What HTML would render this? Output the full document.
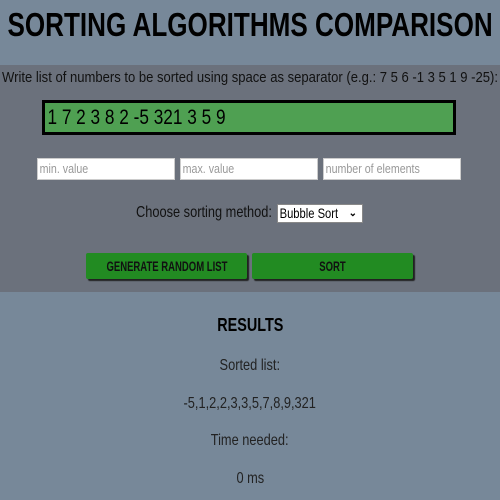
<!DOCTYPE html>
<html><head><style>
body{margin:0;width:500px;height:500px;background:#778899;font-family:"Liberation Sans",Arial,sans-serif;color:#111;position:relative;overflow:hidden}
.t{position:absolute;left:0;width:500px;display:flex;justify-content:center;white-space:nowrap}
.t span{display:inline-block;flex:none;transform:scaleX(.8);transform-origin:center}
#mid{position:absolute;left:0;top:65px;width:500px;height:227px;background:#6b717c}
.inp{position:absolute;top:158px;width:136px;height:20px;background:#fff;border:1px solid #ccc;font-size:13px;color:#999;line-height:20px;overflow:hidden;white-space:nowrap}
.inp span{display:inline-block;transform:scaleX(.82);transform-origin:left;padding-left:2px}
.btn{position:absolute;top:253px;width:161px;height:26px;background:#228b22;box-shadow:2px 2px 1px #222;border-radius:2px;font-size:14px;font-weight:bold;line-height:26px;color:#111;display:flex;justify-content:center;white-space:nowrap}
.btn span{display:inline-block;flex:none;transform:scaleX(.68)}
</style></head><body>
<div id="mid"></div>
<div class="t" style="top:6px;font-size:33px;font-weight:bold;color:#000"><span style="transform:scaleX(.79)">SORTING ALGORITHMS COMPARISON</span></div>
<div class="t" style="top:69px;font-size:15px;color:#111"><span style="transform:scaleX(.87)">Write list of numbers to be sorted using space as separator (e.g.: 7 5 6 -1 3 5 1 9 -25):</span></div>
<div style="position:absolute;left:42px;top:100px;width:408px;height:29px;border:3px solid #000;background:#4fa052;font-size:21px;line-height:29px;color:#000;overflow:hidden;white-space:nowrap"><span style="display:inline-block;transform:scaleX(.82);transform-origin:left;padding-left:3px">1 7 2 3 8 2 -5 321 3 5 9</span></div>
<div class="inp" style="left:37px"><span>min. value</span></div>
<div class="inp" style="left:180px"><span>max. value</span></div>
<div class="inp" style="left:323px"><span>number of elements</span></div>
<div style="position:absolute;left:136px;top:204px;font-size:16px;white-space:nowrap;color:#111"><span style="display:inline-block;transform:scaleX(.8);transform-origin:left">Choose sorting method:</span></div>
<div style="position:absolute;left:277px;top:204px;width:84px;height:17px;background:#fff;border:1px solid #888;font-size:14px;line-height:17px;color:#000;white-space:nowrap"><span style="display:inline-block;transform:scaleX(.8);transform-origin:left;padding-left:2px">Bubble Sort</span><span style="position:absolute;right:5px;top:0;font-size:10px;font-weight:bold">&#x2304;</span></div>
<div class="btn" style="left:86px"><span>GENERATE RANDOM LIST</span></div>
<div class="btn" style="left:252px"><span>SORT</span></div>
<div class="t" style="top:315px;font-size:18px;font-weight:bold;color:#000"><span>RESULTS</span></div>
<div class="t" style="top:357px;font-size:16px;color:#222"><span>Sorted list:</span></div>
<div class="t" style="top:395px;font-size:16px;color:#222"><span>-5,1,2,2,3,3,5,7,8,9,321</span></div>
<div class="t" style="top:432px;font-size:16px;color:#222"><span>Time needed:</span></div>
<div class="t" style="top:470px;font-size:16px;color:#222"><span>0 ms</span></div>
</body></html>
